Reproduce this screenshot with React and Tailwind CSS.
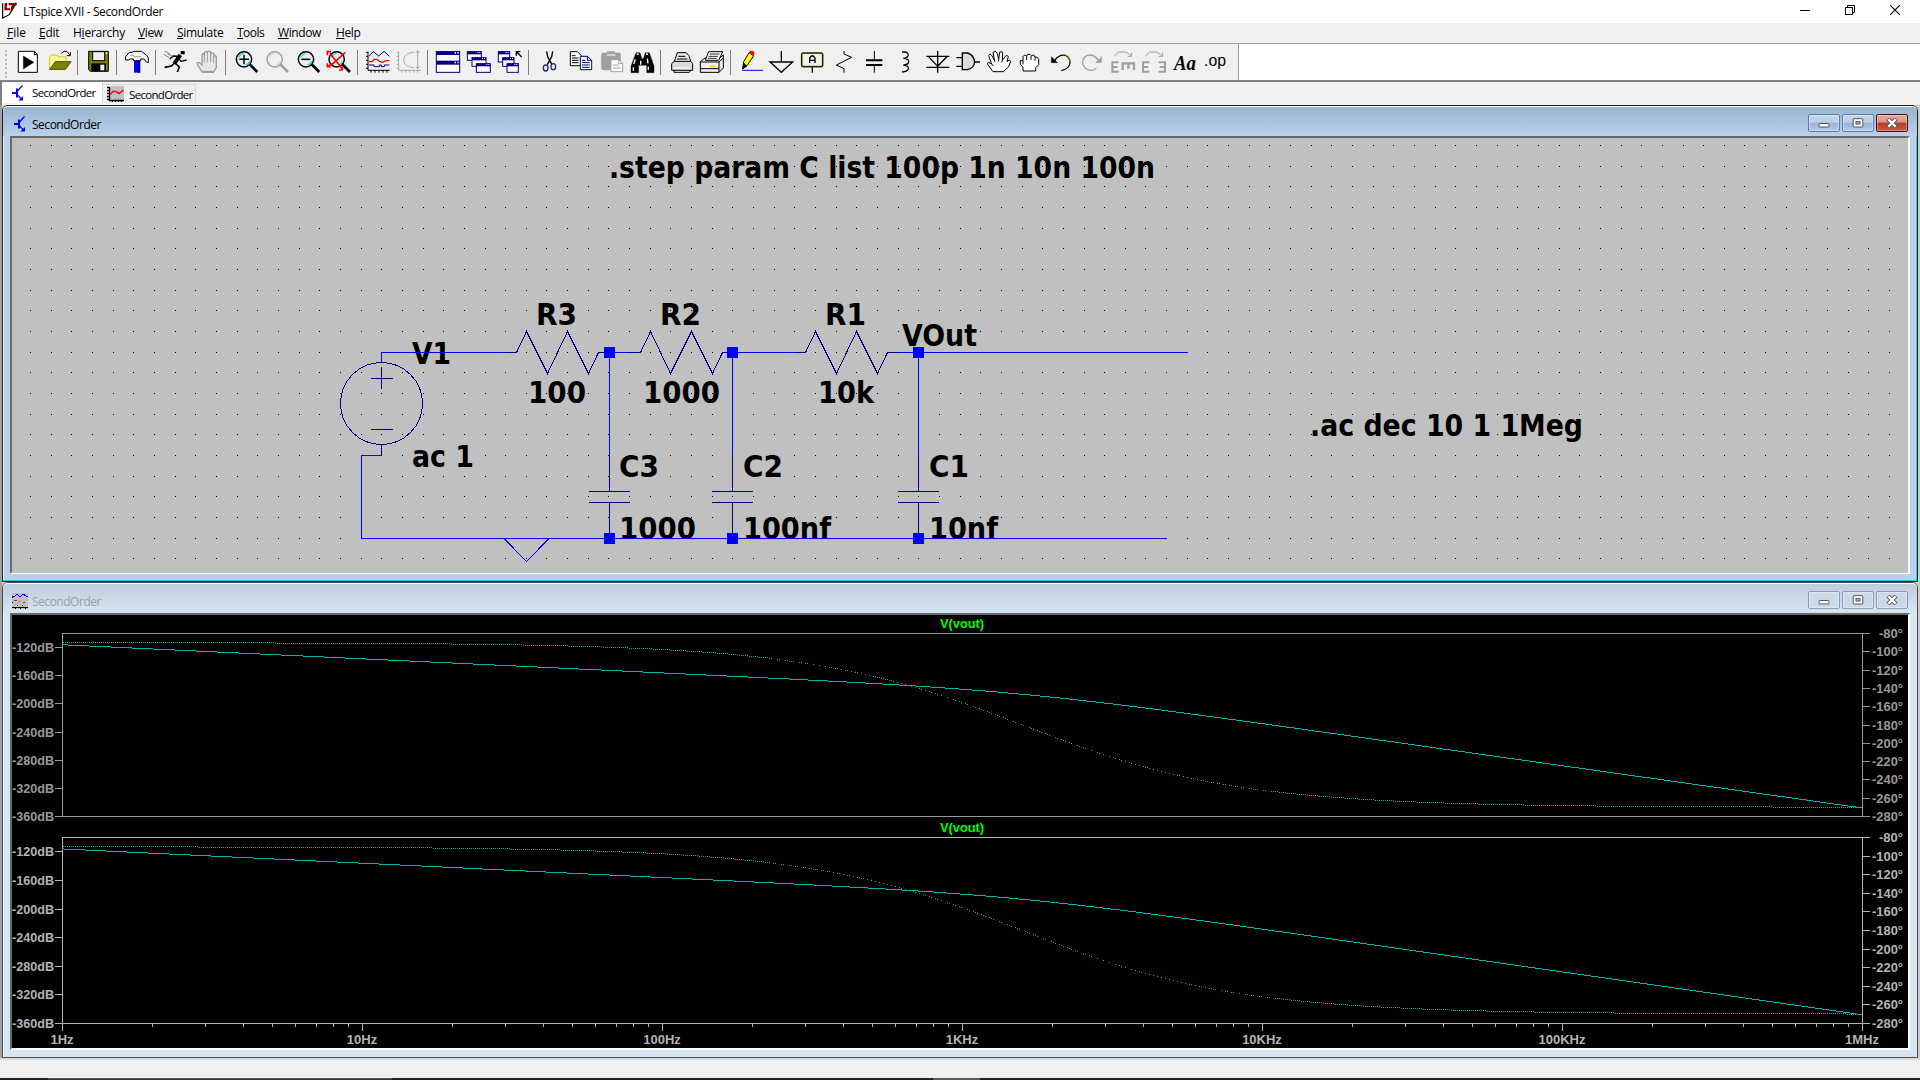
import React from "react";

const UI = "font-['Open_Sans','Noto_Sans',sans-serif]";

/* ---------- toolbar icons ---------- */

const P = ({ d, c = "#000", w = 3, f = "none", ...rest }) => (
  <path d={d} stroke={c} strokeWidth={w} fill={f} {...rest} />
);
const R = ({ x, y, w, h, f = "#000", s, sw = 3 }) => (
  <rect x={x} y={y} width={w} height={h} fill={f} stroke={s} strokeWidth={s ? sw : 0} />
);

const Lens = ({ x, c = "#000", hi = "#00e5ee" }) => (
  <g>
    <P d={`M${x + 45} 195 L${x + 63} 213`} c={c} w={8} strokeLinecap="square" />
    <circle cx={x + 26} cy="178" r="23" fill="#f0f0f0" stroke={c} strokeWidth="4.5" />
    <P d={`M${x + 10} 172 l6 -9 l9 -3 M${x + 30} 195 l9 -4 l4 -8`} c={hi} w={4} />
  </g>
);

const Win = ({ x, y, w, h }) => (
  <g>
    <R x={x} y={y} width={w} w={w} h={h} f="#fff" s="#000080" />
    <R x={x} y={y} w={w} h={8} f="#000080" />
    <R x={x + w - 12} y={y + 1} w={3} h={3} f="#fff" />
    <R x={x + w - 6} y={y + 1} w={3} h={3} f="#fff" />
  </g>
);

const icons = {
  run: [36, 132, (
    <>
      <P d="M55 154 H103 L112 163 V217 H55 Z" f="#fff" />
      <P d="M103 154 V164 H112" />
      <P d="M70 168 V207 L102 187 Z" f="#000" w={1} />
    </>
  )],
  open: [129, 132, (
    <>
      <P d="M149 208 V172 L154 165 H170 L175 171 H198 V184" c="#c8c800" f="#ffff9c" />
      <P d="M149 208 L166 185 H213 L196 208 Z" c="#4a4a00" f="#808000" />
      <P d="M184 160 L192 154 H200 L209 164 M200 167 H211 V156" />
    </>
  )],
  save: [246, 132, (
    <>
      <P d="M266 154 H325 V214 H271 L266 209 Z" f="#808000" />
      <R x={278} y={155} w={36} h={27} f="#f0f0f0" s="#000" />
      <R x={274} y={190} w={44} h={23} />
      <R x={301} y={194} w={12} h={17} f="#f0f0f0" />
      <R x={317} y={157} w={5} h={5} f="#f0f0f0" />
    </>
  )],
  hammer: [363, 132, (
    <>
      <R x={402} y={180} w={18} h={38} f="#0000ff" />
      <R x={414} y={180} w={7} h={38} f="#000080" />
      <P d="M376 171 L388 157 H396 L402 154 H424 L440 166 L445 174 V187 H440 L432 177 H422 V182 H400 V177 H391 L386 180 H377 Z" f="#f4f4f4" />
      <P d="M390 166 H402 M402 170 H422" c="#a0a0a0" />
    </>
  )],
  runner: [480, 132, (
    <>
      <R x={542} y={153} w={12} h={10} />
      <P d="M541 165 L523 190" w={12} />
      <P d="M542 169 L520 168 L509 177 M536 175 L543 184 L560 180" w={4} />
      <P d="M524 189 L514 198 L494 202 M526 190 L538 201 L532 216" w={5} />
      <P d="M494 154 L503 157 L510 163 M502 162 L518 168 M492 162 L498 168 L508 172" w={2} c="#555" />
    </>
  )],
  halt: [573, 132, (
    <>
      <P d="M606 216 L592 193 V188 H598 L606 195 V164 Q609 158 613 164 V158 Q617 152 622 157 V156 Q629 150 633 158 V161 Q639 157 643 164 V168 Q647 165 649 170 V203 L640 217 Z" c="#9a9a9a" f="#e8e8e8" w={4} />
      <P d="M613 163 V188 M622 158 V187 M632 160 V187 M641 166 V190" c="#9a9a9a" />
      <P d="M608 215 H638" c="#9a9a9a" w={5} />
    </>
  )],
  zoomIn: [690, 132, (
    <>
      <Lens x={706} />
      <P d="M732 164 V193 M718 178 H747" w={4.5} />
    </>
  )],
  pan: [783, 132, <Lens x={798} c="#a0a0a0" hi="#d8d8d8" />],
  zoomOut: [876, 132, (
    <>
      <Lens x={892} />
      <P d="M904 178 H931" w={4.5} />
    </>
  )],
  zoomFit: [969, 132, (
    <>
      <Lens x={984} />
      <P d="M990 160 L1027 207 M1036 157 L1000 190 L982 200 M982 166 V155 H993 M1027 200 V210 H1017 M982 190 V200 H992" c="#ff0000" w={5} />
    </>
  )],
  plot: [1086, 132, (
    <>
      <P d="M1104 155 V211 H1169 M1098 157 H1104 M1098 169 H1104 M1098 181 H1104 M1098 193 H1104 M1098 205 H1104 M1113 211 V218 M1125 211 V218 M1137 211 V218 M1149 211 V218 M1161 211 V218" />
      <P d="M1107 169 L1120 155 L1136 168 L1152 154 L1168 169" c="#000080" />
      <P d="M1107 185 H1116 L1122 178 H1131 L1138 184 L1147 187 L1158 182 H1168" c="#ff0000" w={4} />
      <P d="M1107 195 H1122 V200 H1138 V195 H1144 V200 H1153 V195 H1168" c="#000080" />
    </>
  )],
  spectrum: [1179, 132, (
    <P d="M1196 155 V211 H1263 M1190 157 H1196 M1190 169 H1196 M1190 181 H1196 M1190 193 H1196 M1190 205 H1196 M1205 211 V218 M1217 211 V218 M1229 211 V218 M1241 211 V218 M1253 211 V218 M1253 152 V206 M1242 156 Q1212 160 1211 181 Q1212 200 1242 203 M1247 159 L1253 152 L1259 159 M1247 199 L1253 206 L1259 199" c="#a8a8a8" />
  )],
  tile: [96, 12, (
    <>
      <R x={109} y={35} w={70} h={62} f="#fff" s="#000080" />
      <R x={108} y={34} w={72} h={11} f="#000080" />
      <R x={108} y={62} w={72} h={12} f="#000080" />
      <R x={164} y={36} w={4} h={5} f="#fff" /><R x={172} y={36} w={4} h={5} f="#fff" />
      <R x={164} y={65} w={4} h={5} f="#fff" /><R x={172} y={65} w={4} h={5} f="#fff" />
    </>
  )],
  cascade: [189, 12, (
    <>
      <Win x={202} y={35} w={42} h={26} />
      <Win x={216} y={53} w={42} h={26} />
      <Win x={229} y={71} w={42} h={26} />
    </>
  )],
  closeAll: [282, 12, (
    <>
      <Win x={295} y={35} w={34} h={31} />
      <Win x={308} y={53} w={34} h={26} />
      <Win x={321} y={71} w={34} h={26} />
      <P d="M349 47 V35 H361 M350 36 L365 51" w={4} />
    </>
  )],
  cut: [399, 12, (
    <>
      <P d="M440 34 L443 50 L456 74 M458 34 L455 50 L442 74" w={4} />
      <ellipse cx="437" cy="84" rx="7" ry="9" fill="none" stroke="#1c2a78" strokeWidth="4" />
      <ellipse cx="460" cy="80" rx="7" ry="9" fill="none" stroke="#1c2a78" strokeWidth="4" />
    </>
  )],
  copy: [492, 12, (
    <>
      <P d="M511 35 H532 L544 47 V77 H511 Z" f="#fff" />
      <P d="M516 47 H527 M516 54 H536 M516 61 H536 M516 68 H536" />
      <P d="M541 49 H562 L575 61 V89 H541 Z" c="#000080" f="#fff" />
      <P d="M562 49 V61 H575 M546 61 H556 M546 68 H569 M546 75 H569 M546 82 H569" c="#000080" />
    </>
  )],
  paste: [585, 12, (
    <>
      <P d="M604 42 L608 38 H622 V34 H644 V38 H658 L662 42 V86 L658 90 H608 L604 86 Z" c="#a0a0a0" f="#a0a0a0" w={1} />
      <R x={620} y={43} w={26} h={4} f="#e8e8e8" />
      <P d="M633 59 H656 L668 71 V95 H633 Z" c="#a0a0a0" f="#fff" />
      <P d="M656 59 V71 H668 M639 75 H656 M639 84 H662" c="#a0a0a0" />
    </>
  )],
  find: [678, 12, (
    <>
      <P d="M708 38 H720 L726 56 H730 L736 38 H748 L762 78 V98 H740 V76 H716 V98 H693 V78 Z" f="#000" w={1} />
      <P d="M706 58 L701 72 M722 62 V74 M742 56 L744 70 M700 82 V92 M745 80 V90" c="#fff" w={4} />
      <R x={710} y={40} w={6} h={5} f="#ddd" /><R x={738} y={40} w={6} h={5} f="#ddd" />
    </>
  )],
  print: [795, 12, (
    <>
      <P d="M823 64 L832 38 H858 L867 47 L872 64" f="#e6e6e6" />
      <P d="M815 71 L822 64 H872 L878 71 V91 H815 Z" f="#dadada" />
      <P d="M822 97 H868 L872 91 M822 97 V91 M835 49 H856 M831 57 H862" />
      <P d="M820 84 H872" c="#fff" />
    </>
  )],
  setup: [888, 12, (
    <>
      <P d="M901 65 L915 54 H959 L970 45 V84 L957 97 H901 Z" f="#f0f0f0" />
      <P d="M916 61 L926 35 H968 L956 61 Z" f="#fff" />
      <P d="M929 42 H958 M926 49 H954 M923 55 H950" w={2.5} />
      <P d="M901 66 H957 V97 M957 66 L970 54 M901 86 H957" />
      <R x={930} y={76} w={16} h={6} f="#f0e800" />
    </>
  )],
  wire: [1005, 12, (
    <>
      <P d="M1026 91 H1089" c="#0000ff" />
      <P d="M1031 65 L1047 38 L1061 47 L1042 76 L1028 87 Z" f="#ffff00" />
      <P d="M1031 68 L1028 87 L1041 78 Z" f="#000" w={1} />
      <P d="M1047 38 L1051 33 H1059 L1063 39 L1060 47 Z" c="#ff0000" f="#ff0000" w={1} />
    </>
  )],
  ground: [1098, 12, <P d="M1144 33 V66 M1110 66 H1178 L1144 97 Z" w={4} />],
  label: [1191, 12, (
    <>
      <rect x="1205" y="39" width="63" height="41" rx="5" fill="#f0f0f0" stroke="#6b6b00" strokeWidth="5" />
      <rect x="1205" y="39" width="63" height="41" rx="5" fill="none" stroke="#000" strokeWidth="2.5" />
      <P d="M1229 69 V54 L1234 48 H1240 L1245 54 V69 M1229 61 H1245 M1237 82 V98" w={4} />
    </>
  )],
  resistor: [24, 12, <P d="M72 33 V42 L95 52 L49 75 L72 86 V98" />],
  capacitor: [117, 12, (
    <>
      <P d="M163 33 V60 M163 77 V98" />
      <P d="M138 61 H187 M138 75 H187" w={6} />
    </>
  )],
  inductor: [210, 12, <P d="M246 36 H256 Q267 39 264 48 Q260 55 250 55 Q267 56 266 66 Q264 75 250 75 Q267 77 265 87 Q262 95 246 96" w={4} />],
  diode: [303, 12, <P d="M353 33 V98 M319 49 H388 M325 49 L353 79 L382 49 M319 82 H388" w={4} />],
  gate: [396, 12, (
    <>
      <P d="M409 53 H427 M409 79 H427 M462 66 H480" w={4} />
      <path d="M427 39 H443 Q462 46 464 66 Q462 84 443 89 H427 Z" fill="#dcdcdc" stroke="#000" strokeWidth="4" />
    </>
  )],
  move: [489, 12, (
    <>
      <P d="M519 95 L502 72 L505 67 L515 72 L506 47 L510 42 L515 46 L523 60 L519 37 L526 34 L531 39 L536 58 L539 37 L546 35 L548 41 L547 61 L559 46 L565 49 L561 65 L568 60 L572 64 L566 80 L550 95 Z" f="#fff" />
      <P d="M515 72 L520 78 M523 60 L525 66 M536 58 V64 M547 61 L545 67" />
    </>
  )],
  drag: [582, 12, (
    <>
      <P d="M609 93 V82 L601 73 V62 H609 V50 L614 45 L620 48 L623 43 L630 43 L634 47 L641 45 L645 51 L652 52 L656 58 V74 L647 83 V93 Z" f="#fff" />
      <P d="M620 48 V60 M633 48 V60 M645 52 V62 M609 62 V73" />
    </>
  )],
  undo: [675, 12, (
    <>
      <P d="M704 61 Q718 42 736 46 Q751 52 750 69 Q747 87 724 92" w={4} />
      <P d="M735 45 Q750 50 750 66" c="#8c8c00" w={3} />
      <P d="M694 50 V68 H713 Z" f="#000" w={1} />
    </>
  )],
  redo: [768, 12, (
    <>
      <P d="M835 60 Q820 41 802 46 Q787 52 788 70 Q792 88 812 91 Q824 92 829 84" c="#a0a0a0" w={4} />
      <P d="M845 50 V68 H826 Z" c="#a0a0a0" f="#a0a0a0" w={1} />
    </>
  )],
  rotate: [861, 12, (
    <>
      <P d="M883 48 L896 36 H918 L935 48 M935 37 V49 H923" c="#a0a0a0" />
      <P d="M896 67 H877 V95 H896 M877 81 H893" c="#a0a0a0" w={6} />
      <P d="M908 90 V70 H942 V90 M925 70 V86" c="#a0a0a0" w={7} />
    </>
  )],
  mirror: [954, 12, (
    <>
      <P d="M976 48 L989 36 H1011 L1028 48 M1028 37 V49 H1016" c="#a0a0a0" />
      <P d="M988 67 H969 V95 H988 M969 81 H985" c="#a0a0a0" w={6} />
      <P d="M1016 67 H1035 V95 H1016 M1035 81 H1019" c="#a0a0a0" w={6} />
    </>
  )],
  text: [1047, 12, (
    <text x="1062" y="90" fontSize="62" textLength="66" lengthAdjust="spacingAndGlyphs" className="font-['Liberation_Serif',serif] font-bold italic">Aa</text>
  )],
  op: [1140, 12, (
    <text x="1152" y="79" fontSize="50" textLength="66" lengthAdjust="spacingAndGlyphs" className="font-['Liberation_Sans',sans-serif]">.op</text>
  )],
};

const toolbar = [
  "run", "open", "|", "save", "|", "hammer", "|", "runner", "halt", "|",
  "zoomIn", "pan", "zoomOut", "zoomFit", "|", "plot", "spectrum", "|",
  "tile", "cascade", "closeAll", "|", "cut", "copy", "paste", "find", "|",
  "print", "setup", "|", "wire", "ground", "label", "resistor", "capacitor",
  "inductor", "diode", "gate", "move", "drag", "undo", "redo", "rotate",
  "mirror", "text", "op",
];

const ToolIcon = ({ name }) => {
  const [x, y, art] = icons[name];
  return (
    <svg viewBox={`${x} ${y} 93 108`} className="h-9 w-[31px] shrink-0">{art}</svg>
  );
};

const Toolbar = () => (
  <div className="flex h-9 bg-white">
    <div className="flex w-[1239px] items-start border-r border-[#a0a0a0] bg-[#f0f0f0]">
      <div className="ml-[5px] mr-[5px] mt-1.5 flex h-7 w-0.5 flex-col justify-between">
        {Array.from({ length: 7 }, (_, i) => <span key={i} className="h-0.5 w-0.5 bg-[#bdbdbd]" />)}
      </div>
      {toolbar.map((t, i) =>
        t === "|" ? (
          <div key={i} className="flex w-2 shrink-0 justify-center"><div className="mt-1.5 mr-px h-[25px] w-px bg-[#808080]" /></div>
        ) : (
          <ToolIcon key={i} name={t} />
        )
      )}
    </div>
  </div>
);

/* ---------- window chrome ---------- */

const TransistorIcon = () => (
  <svg viewBox="0 0 16 16" className="h-4 w-4 shrink-0">
    <path d="M0 8 H5 M5 3.5 V12.5" stroke="#0000ff" strokeWidth="2" fill="none" />
    <path d="M5.5 6 L10.5 0.5 M5.5 10 L10 14.5" stroke="#0000ff" strokeWidth="1.2" fill="none" />
    <path d="M11 11 V15.5 H6.5 Z" fill="#0000ff" />
  </svg>
);

const PlotTabIcon = () => (
  <svg viewBox="0 0 17 16" className="h-4 w-[17px] shrink-0">
    <rect x="3" width="14" height="14" fill="#c0c0c0" />
    <path d="M2.5 1 V14.5 H17 M0 1.5 H2 M0 4.5 H2 M0 7.5 H2 M0 10.5 H2 M0 13.5 H2 M5.5 14 V16 M8.5 14 V16 M11.5 14 V16 M14.5 14 V16" stroke="#000" fill="none" strokeWidth="1.3" />
    <path d="M3 8.5 L6 5.5 H9 L12 7.5 L16.5 4" stroke="#ff0000" strokeWidth="1.5" fill="none" />
  </svg>
);

const PlotWindowIcon = () => (
  <svg viewBox="0 0 16 16" className="h-4 w-4 shrink-0" shapeRendering="crispEdges">
    <rect width="16" height="16" fill="#c0c0c0" />
    <path d="M0 3.5 L2 4 L5 1 L8 4 L11 1 L15.5 4" stroke="#0000ff" fill="none" />
    <path d="M2 7.5 H5 M7 8.5 H8 M11 9.5 H13" stroke="#ff0000" />
    <path d="M0 14.5 H16" stroke="#000" />
    <path d="M0 4 h1 v1 h-1z M0 9 h1 v1 h-1z M5 12 h1 v1 h-1z M10 12 h1 v1 h-1z M3 15 h1 v1 h-1z M8 15 h1 v1 h-1z M13 15 h1 v1 h-1z" fill="#000" />
  </svg>
);

const CaptionButton = ({ kind, active }) => {
  const tone = kind === "close" && active
    ? "border-[#4a0d12] bg-[linear-gradient(#e9a99f_0%,#dc8f84_45%,#b83a26_50%,#c8583f_100%)]"
    : active
      ? "border-[#5f7da4] bg-[linear-gradient(#c3d7ec_0%,#b9d0e8_45%,#98b5d3_50%,#aecbe8_100%)]"
      : "border-[#8a9bb8] bg-[#cbd9e8]";
  return (
    <div className={`flex h-[18px] w-8 items-center justify-center rounded-[2px] border shadow-[inset_0_0_0_1px_rgba(255,255,255,0.35)] ${tone}`}>
      <svg viewBox="0 0 12 10" className="h-2.5 w-3">
        {kind === "min" && <rect x="1" y="5.5" width="10" height="3.5" rx="0.5" fill="#fff" stroke="#535666" />}
        {kind === "max" && (
          <>
            <rect x="1.2" y="0.7" width="9.6" height="8.3" rx="0.5" fill="#fff" stroke="#535666" />
            <rect x="4" y="3.5" width="4" height="2.5" fill="#9fb8d4" stroke="#535666" />
          </>
        )}
        {kind === "close" && (
          <>
            <path d="M2 1 L10 9 M10 1 L2 9" stroke="#535666" strokeWidth="4.2" />
            <path d="M2.4 1.4 L9.6 8.6 M9.6 1.4 L2.4 8.6" stroke="#fff" strokeWidth="2.2" />
          </>
        )}
      </svg>
    </div>
  );
};

const CaptionButtons = ({ active }) => (
  <div className="flex gap-0.5">
    <CaptionButton kind="min" active={active} />
    <CaptionButton kind="max" active={active} />
    <CaptionButton kind="close" active={active} />
  </div>
);

/* ---------- schematic ---------- */

const GRID = 20.655;
const dotPath = Array.from({ length: 21 }, (_, r) =>
  Array.from({ length: 91 }, (_, c) => `M${Math.round(30.1 + c * GRID)} ${Math.round(145.1 + r * GRID)}h1v1h-1z`).join("")
).join("");

const schematicTexts = [
  [".step param C list 100p 1n 10n 100n", 609, 178, 546],
  ["R3", 536, 325, 41], ["R2", 660, 325, 41], ["R1", 825, 325, 41],
  ["V1", 412, 364, 39], ["VOut", 902, 346, 75], ["ac 1", 412, 467, 62],
  ["100", 528, 403, 58], ["1000", 643, 403, 77], ["10k", 818, 403, 56],
  ["C3", 619, 477, 40], ["C2", 743, 477, 40], ["C1", 929, 477, 40],
  ["1000", 619, 539, 77], ["100nf", 743, 539, 88], ["10nf", 929, 539, 69],
  [".ac dec 10 1 1Meg", 1310, 436, 273],
];

const resistors = [
  "M506 352.5 H516.5 L526.5 331.5 L547.5 373.5 L567.5 331.5 L588.5 373.5 L598.5 352.5 H609",
  "M629 352.5 H640.5 L650.5 331.5 L670.5 373.5 L691.5 331.5 L712.5 373.5 L722.5 352.5 H732",
  "M795 352.5 H805.5 L815.5 331.5 L836.5 373.5 L856.5 331.5 L877.5 373.5 L887.5 352.5 H898",
];

const Schematic = () => (
  <svg viewBox="12 138 1896 435" className="block h-[435px] w-[1896px] bg-[#c0c0c0]">
    <path d={dotPath} fill="#000" shapeRendering="crispEdges" />
    <g fontSize="29.5" fill="#000" className="font-['DejaVu_Sans_Condensed','DejaVu_Sans',sans-serif] font-bold">
      {schematicTexts.map(([t, x, y, w], i) => (
        <text key={i} x={x} y={y} textLength={w} lengthAdjust="spacingAndGlyphs">{t}</text>
      ))}
    </g>
    <g fill="none" strokeWidth="1" shapeRendering="crispEdges">
      <path stroke="#0000ff" d="M381.5 362 V352.5 H506 M609 352.5 H629 M732 352.5 H795 M898 352.5 H1188 M381.5 455.5 H361.5 V538.5 H1167 M609.5 352 V455 M732.5 352 V455 M918.5 352 V455" />
      <path stroke="#0000ff" d="M504 538.5 L526.5 561.5 L549 538.5" />
      <g stroke="#000080">
        {resistors.map((d) => <path key={d} d={d} />)}
        {[609, 732, 918].map((x) => (
          <path key={x} d={`M${x + 0.5} 455 V491 M${x - 20} 491.5 H${x + 21} M${x - 20} 502.5 H${x + 21} M${x + 0.5} 502 V538`} />
        ))}
        <circle cx="381.5" cy="403.5" r="41" />
        <path d="M371 378.5 H393 M381.5 367 V389 M371 429.5 H393 M381.5 444 V455" />
      </g>
    </g>
    {[609, 732, 918].map((x) => (
      <g key={x} fill="#0000ff">
        <rect x={x - 5} y="347" width="11" height="11" />
        <rect x={x - 5} y="533" width="11" height="11" />
      </g>
    ))}
  </svg>
);

/* ---------- Bode plots ---------- */

// Transfer function of the loaded RC ladder.
const response = (x) => {
  const w = 2 * Math.PI * Math.pow(10, (x - 62) / 300);
  const re = 1 - w * w * 1e-8;
  const im = w * 2.1e-4;
  return {
    db: -20 * Math.log10(w * 1e5) - 20 * Math.log10(Math.hypot(re, im)),
    deg: -90 - (Math.atan2(im, re) * 180) / Math.PI,
  };
};

const tracePaths = (top, bottom) => {
  const h = bottom - top;
  let mag = "";
  let phase = "";
  let prev = null;
  for (let x = 62; x <= 1862; x++) {
    const { db, deg } = response(x);
    const y = Math.round(top + ((-100 - db) / 260) * h);
    if (y !== prev) mag += `${prev === null ? "" : `H${x}`}M${x} ${y + 0.5}`;
    prev = y;
    const py = top + ((-80 - deg) / 200) * h;
    const slope = ((deg - response(x + 1).deg) / 200) * h;
    const dash = slope > 0.12 ? (py + 0.5) % 1 < 0.58 : true;
    if (x % 2 === 1 && dash) phase += `M${x} ${Math.round(py)}h1v1h-1z`;
  }
  return [mag + "H1862", phase];
};

const Plot = ({ top, bottom, color, title, freq }) => {
  const [mag, phase] = tracePaths(top, bottom);
  const h = bottom - top;
  const dbs = [-120, -160, -200, -240, -280, -320, -360];
  const degs = Array.from({ length: 11 }, (_, i) => -80 - i * 20);
  const yDb = (v) => Math.round(top + ((-100 - v) / 260) * h);
  const yDeg = (v) => Math.round(top + ((-80 - v) / 200) * h);
  const minor = [];
  for (let d = 0; d < 6; d++) for (let n = 2; n < 10; n++) minor.push(Math.round(62 + 300 * (d + Math.log10(n))));
  return (
    <g>
      <g shapeRendering="crispEdges" stroke={color} fill="none">
        <path d={`M62.5 ${top} V${bottom} M1862.5 ${top} V${bottom} M62 ${top + 0.5} H1870 M55 ${bottom + 0.5} H1870`} />
        <path d={dbs.map((v) => `M55 ${yDb(v) + 0.5} H62`).join("") + degs.map((v) => `M1862 ${yDeg(v) + 0.5} H1870`).join("")} />
        {freq && (
          <path d={minor.map((x) => `M${x + 0.5} ${bottom} v4`).join("") + freq.map((_, i) => `M${62.5 + 300 * i} ${bottom} v8`).join("")} />
        )}
      </g>
      <path d={mag} stroke="#00b4b4" fill="none" shapeRendering="crispEdges" />
      <path d={phase} fill="#00b4b4" shapeRendering="crispEdges" />
      <g fontSize="13" fill={color} className="font-['Liberation_Sans',sans-serif] font-bold">
        {dbs.map((v) => <text key={v} x="12" y={yDb(v) + 5} textLength="42" lengthAdjust="spacingAndGlyphs">{v}dB</text>)}
        {degs.map((v) => (
          <text key={v} x={v === -80 ? 1879 : 1872} y={yDeg(v) + 5} textLength={v === -80 ? 24 : 31} lengthAdjust="spacingAndGlyphs">{v}°</text>
        ))}
        {freq && freq.map((f, i) => (
          <text key={f} x={62 + 300 * i} y={bottom + 21} textAnchor="middle">{f}</text>
        ))}
        <text x="940" y={title} fill="#00ff00" textLength="44" lengthAdjust="spacingAndGlyphs">V(vout)</text>
      </g>
    </g>
  );
};

const Waveforms = () => (
  <svg viewBox="12 615 1896 433" className="block h-[433px] w-[1896px] bg-black">
    <Plot top={633} bottom={816} color="#999999" title={628} />
    <Plot top={837} bottom={1023} color="#b4b4b4" title={832} freq={["1Hz", "10Hz", "100Hz", "1KHz", "10KHz", "100KHz", "1MHz"]} />
  </svg>
);

/* ---------- page ---------- */

const menus = [
  ["F", "ile", "w-8", "tracking-[0px]", ""],
  ["E", "dit", "w-[34px]", "tracking-[-0.3px]", ""],
  ["i", "erarchy", "w-[65px]", "tracking-[-0.25px]", "H"],
  ["V", "iew", "w-[39px]", "tracking-[-0.4px]", ""],
  ["S", "imulate", "w-[60px]", "tracking-[-0.3px]", ""],
  ["T", "ools", "w-[41px]", "tracking-[-0.5px]", ""],
  ["W", "indow", "w-[58px]", "tracking-[-0.4px]", ""],
  ["H", "elp", "w-10", "tracking-[-0.4px]", ""],
];

export default function App() {
  return (
    <div className={`flex h-[1080px] w-[1920px] flex-col overflow-hidden bg-[#f0f0f0] text-[12px] leading-4 text-black ${UI}`}>
      <header className="flex h-[23px] items-center bg-white">
        <svg viewBox="0 0 48 51" className="ml-0.5 mb-0.5 h-[17px] w-4">
          <path d="M2 4 V48 L22 38 L36 14 L42 2" fill="none" stroke="#000" strokeWidth="3.5" />
          <path d="M8 3 H16 L14 19 H24 V25 H7 Z M20 3 H45 L43 11 H36 L31 26 H25 L29 10 H20 Z" fill="#8b0000" />
        </svg>
        <span className="ml-[5px] mt-px tracking-[-0.37px]">LTspice XVII - SecondOrder</span>
        <div className="ml-auto mr-5 flex items-center gap-[35px]">
          <svg viewBox="0 0 10 10" className="mb-[3px] h-2.5 w-2.5"><path d="M0 5.5 H10" stroke="#000" /></svg>
          <svg viewBox="0 0 10 10" className="mb-[3px] h-2.5 w-2.5"><path d="M0.5 2.5 H7.5 V9.5 H0.5 Z M2.5 2 V0.5 H9.5 V7.5 H8" fill="none" stroke="#000" /></svg>
          <svg viewBox="0 0 10 10" className="mb-[3px] h-2.5 w-2.5"><path d="M0 0 L10 10 M10 0 L0 10" stroke="#000" strokeWidth="1.1" /></svg>
        </div>
      </header>

      <nav className="flex h-[21px] items-center border-b border-[#a0a0a0] pl-[7px]">
        {menus.map(([key, rest, width, tracking, pre]) => (
          <span key={key + rest} className={`${width} ${tracking} whitespace-nowrap`}>{pre}<span className="underline">{key}</span>{rest}</span>
        ))}
      </nav>

      <Toolbar />

      <div className="flex h-[25px] items-start border-l-2 border-t-2 border-[#808080] bg-[#f0f0f0]">
        <div className="mt-px flex h-5 w-[101px] items-center border-r border-[#d9d9d9] bg-white pl-2.5">
          <TransistorIcon />
          <span className="ml-1 text-[11.5px] tracking-[-0.68px]">SecondOrder</span>
        </div>
        <div className="mt-0.5 flex h-[19px] w-[93px] items-center border-r border-t border-[#d9d9d9] pl-1">
          <PlotTabIcon />
          <span className="ml-[5px] mt-0.5 text-[11.5px] tracking-[-0.68px]">SecondOrder</span>
        </div>
      </div>

      <main className="flex h-[953px] flex-col border-l-2 border-[#a0a0a0] bg-[#d0ccc4] pr-0.5">
        <section className="flex h-[477px] flex-col rounded-t-[6px] border-l border-r border-b border-t border-[#202020] bg-[#b9d1ea] shadow-[inset_-1px_-1px_0_#19d3f3,inset_1px_1px_0_#eef5fc]">
          <div className="flex h-[30px] items-center rounded-t-[5px] border-t border-white bg-[linear-gradient(#99b4d1,#b9d1ea)] pl-[11px] pr-[9px]">
            <div className="mt-[5px]"><TransistorIcon /></div>
            <span className="ml-0.5 mt-1.5 tracking-[-0.48px]">SecondOrder</span>
            <div className="ml-auto mt-0.5"><CaptionButtons active /></div>
          </div>
          <div className="ml-[7px] h-[438px] w-[1900px] border-2 border-b-white border-l-[#696969] border-r-white border-t-[#696969]">
            <Schematic />
          </div>
        </section>
        <section className="flex h-[476px] flex-col rounded-t-[6px] border border-[#4a4a4a] bg-[#d7e4f2] shadow-[inset_1px_1px_0_#eef5fc]">
          <div className="flex h-[30px] items-center rounded-t-[5px] border-t border-white bg-[linear-gradient(#bfcddb,#d7e4f2)] pl-[9px] pr-[9px]">
            <div className="mt-[5px]"><PlotWindowIcon /></div>
            <span className="ml-1 mt-1.5 tracking-[-0.48px] text-[#9b9fa5]">SecondOrder</span>
            <div className="ml-auto mt-[3px]"><CaptionButtons /></div>
          </div>
          <div className="ml-[7px] h-[437px] w-[1900px] border-2 border-b-white border-l-[#696969] border-r-white border-t-[#696969]">
            <Waveforms />
          </div>
        </section>
      </main>

      <footer className="h-5 border-t-2 border-t-[#dcdcdc] bg-[#f0f0f0]" />
      <div className="flex h-0.5 bg-[#202327]">
        <div className="ml-12 h-0.5 w-[344px] border-t border-[#5a5d60] bg-[#33363a]" />
        <div className="ml-[541px] h-0.5 w-[47px] bg-[#5a5d60]" />
      </div>
    </div>
  );
}
